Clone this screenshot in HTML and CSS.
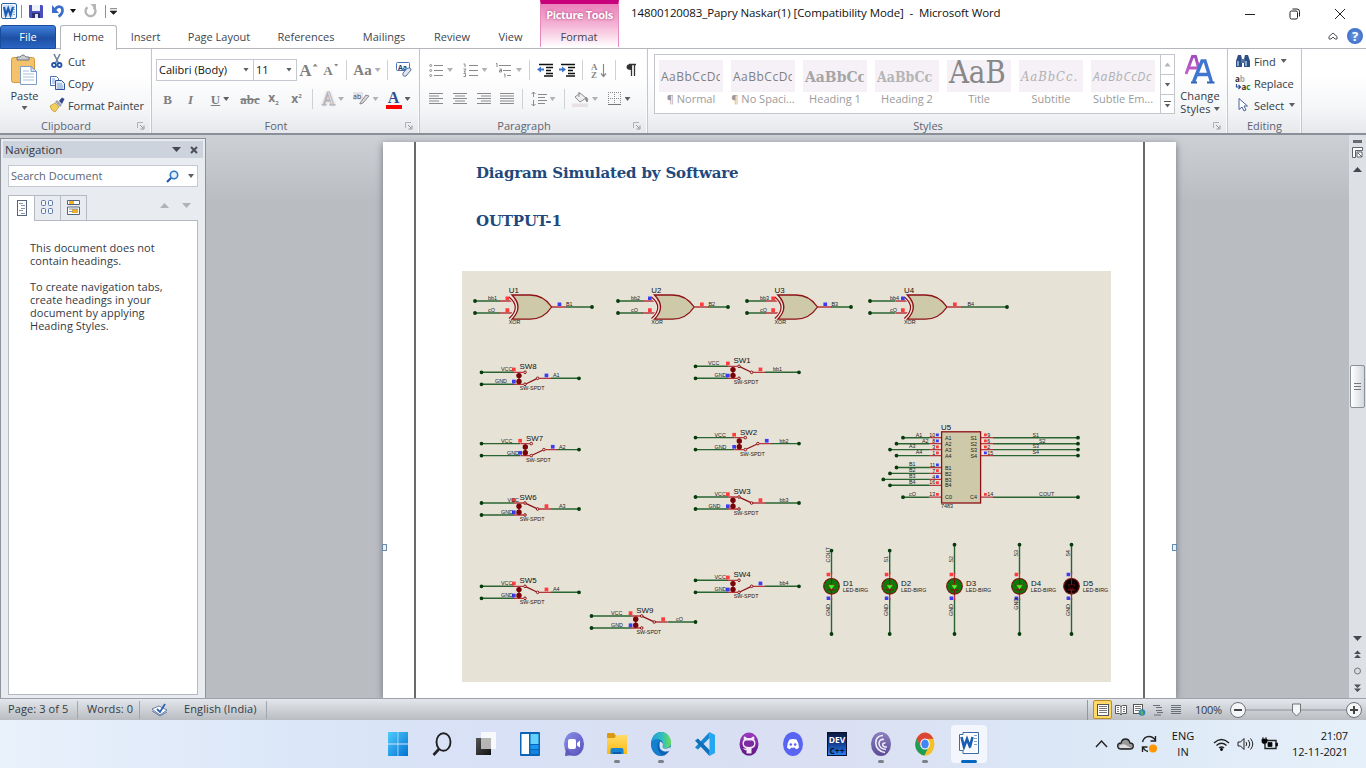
FILE: index.html
```html
<!DOCTYPE html>
<html lang="en">
<head>
<meta charset="utf-8">
<title>14800120083_Papry Naskar(1) [Compatibility Mode] - Microsoft Word</title>
<link rel="stylesheet" href="styles.css">
</head>
<body>
<svg class="defs" width="0" height="0">
  <defs>
    <linearGradient id="gWin" x1="0" y1="0" x2="1" y2="1"><stop offset="0" stop-color="#4fcbfa"/><stop offset="1" stop-color="#0273d4"/></linearGradient>
    <linearGradient id="gChat" x1="0" y1="0" x2="1" y2="1"><stop offset="0" stop-color="#8b8fe8"/><stop offset="1" stop-color="#5450b8"/></linearGradient>
    <linearGradient id="gFold" x1="0" y1="0" x2="0" y2="1"><stop offset="0" stop-color="#ffdc66"/><stop offset="1" stop-color="#fdb913"/></linearGradient>
    <linearGradient id="gEdge" x1="0" y1="0" x2="1" y2="0"><stop offset="0" stop-color="#1c9de0"/><stop offset=".6" stop-color="#35c1b8"/><stop offset="1" stop-color="#6ade55"/></linearGradient>
    <linearGradient id="gGray" x1="0" y1="0" x2="1" y2="1"><stop offset="0" stop-color="#555"/><stop offset="1" stop-color="#111"/></linearGradient>
    <linearGradient id="gGh" x1="0" y1="0" x2="0" y2="1"><stop offset="0" stop-color="#9a3cc0"/><stop offset="1" stop-color="#5e1680"/></linearGradient>
    <linearGradient id="gDev" x1="0" y1="0" x2="0" y2="1"><stop offset="0" stop-color="#0b1a40"/><stop offset=".45" stop-color="#12388a"/><stop offset="1" stop-color="#2a80f0"/></linearGradient>
    <linearGradient id="gBit" x1="0" y1="0" x2="0" y2="1"><stop offset="0" stop-color="#8b80c0"/><stop offset="1" stop-color="#5b4c94"/></linearGradient>
    <linearGradient id="gPurple" x1="0" y1="0" x2="0" y2="1"><stop offset="0" stop-color="#a04cc0"/><stop offset="1" stop-color="#c860c8"/></linearGradient>
    <symbol id="launcher" viewBox="0 0 8 8"><path d="M.5 6V.5H6" fill="none" stroke="#aeb2b8"/><path d="M3 3l3 3M7 3.500V7H3.500" fill="none" stroke="#8f949b"/></symbol>
    <symbol id="word" viewBox="0 0 16 16"><rect x=".5" y=".5" width="15" height="15" rx="1.500" fill="#f4f8fd" stroke="#2a64ad"/><path d="M2 2h10v12H2z" fill="#cfe0f5"/><path d="M12 4h2M12 6.500h2M12 9h2M12 11.500h2" stroke="#7fa3cf"/><path d="M3 4l1.800 8L7.200 5.500 9.500 12 12 4" fill="none" stroke="#1b5cb5" stroke-width="2.200"/></symbol>
    <g id="gate">
      <path d="M-9-6H6M-9 6H6M43 0H57" class="pin"/>
      <path d="M3-12H21C32-12 38-7 42.700 0 38 7 32 12.200 21 12.200H3Q15 0 3-12Z" class="body"/>
      <path d="M0-10Q12.500 0 0 11.500" class="arc-gap"/>
      <path d="M0-10Q12.500 0 0 11.500" class="maroon"/>
    </g>
    <g id="sw">
      <path d="M-11 0H-1.500M-11 12H-1.500M14 6H26" class="pin"/>
      <path d="M-6 1V11" class="maroon"/>
      <circle cx="-6" cy="3.300" r="2.700" class="ball"/><circle cx="-6" cy="9.200" r="2.700" class="ball"/>
      <circle cx="0" cy="0" r="1.300" class="node"/><circle cx="0" cy="12" r="1.300" class="node"/><circle cx="12.600" cy="6" r="1.300" class="node"/>
      <rect x="-13" y="-4.700" width="3.700" height="3.700" class="hi"/><rect x="-13" y="7.400" width="3.700" height="3.700" class="lo"/>
      <text x="-5.300" y="18.200" class="s">SW-SPDT</text>
    </g>
    <g id="up"><path d="M1.200.6L11.400 5.400" class="maroon"/><rect x="19.600" y="1.300" width="3.700" height="3.700" class="hi"/></g>
    <g id="down"><path d="M1.200 11.400L11.400 6.600" class="maroon"/><rect x="19.600" y="1.300" width="3.700" height="3.700" class="lo"/></g>
    <g id="led">
      <path d="M0-14V14" class="pin"/><circle r="7.800" class="lamp"/>
      <path d="M0-7.800V7.800M-4 3.600H4" class="maroon"/><path d="M-3.700-1.500H3.700L0 3.400Z" class="tri"/>
      <text x="11.300" y="6.200" class="s">LED-BIRG</text>
    </g>
  </defs>
</svg>

<header class="titlebar">
  <div class="quick">
    <svg width="16" height="16"><use href="#word"/></svg>
    <i class="vbar"></i>
    <svg width="14" height="14" viewBox="0 0 14 14"><path d="M0 1h13l1 1v12H1L0 13z" fill="#4a4fc0"/><path d="M3 1h8v6H3z" fill="#eef2ff"/><path d="M3 9h8v5H3z" fill="#2b2f70"/><path d="M6 10h3v4H6z" fill="#dfe3f5"/></svg>
    <svg width="13" height="14" viewBox="0 0 13 14"><path d="M3 5.500C6 1 11 2 10.500 7c-.3 2.500-2 4.500-4 5.500" fill="none" stroke="#3b6ec8" stroke-width="2.600"/><path d="M0 1v8h7z" fill="#3b6ec8"/></svg>
    <i class="caret dark"></i>
    <svg width="13" height="14" viewBox="0 0 13 14"><path d="M3.500 3.200a5 5 0 1 0 6 0" fill="none" stroke="#b5b5b5" stroke-width="2.400"/><path d="M6.500 0h5.500v6z" fill="#b5b5b5"/></svg>
    <i class="vbar"></i>
    <svg width="7" height="7" viewBox="0 0 7 7"><path d="M0 .7h7M0 3h7L3.500 6.500z" fill="#222" stroke="#222" stroke-width=".6"/></svg>
  </div>
  <div class="title">14800120083_Papry Naskar(1) [Compatibility Mode]&nbsp; -&nbsp; Microsoft Word</div>
  <div class="winbtns">
    <svg width="12" height="12" viewBox="0 0 12 12"><path d="M1 6.500h10" class="ln"/></svg>
    <svg width="12" height="12" viewBox="0 0 12 12"><rect x="1" y="3" width="7.500" height="8" rx="1.500" class="ln"/><path d="M3.500 1h4.500q2.500 0 2.500 2.500v5" class="ln"/></svg>
    <svg width="12" height="12" viewBox="0 0 12 12"><path d="M1 1l10 10M11 1L1 11" class="ln"/></svg>
  </div>
</header>

<nav class="tabs">
  <span class="file">File</span><span class="home">Home</span><span class="t1">Insert</span><span class="t2">Page Layout</span><span class="t3">References</span><span class="t4">Mailings</span><span class="t5">Review</span><span class="t6">View</span>
  <div class="ctx"><b>Picture Tools</b><span>Format</span></div>
  <div class="help">
    <svg width="10" height="8" viewBox="0 0 10 8"><path d="M1 4.500L5 1l4 3.500v2.500H7L5 5 3 7H1z" fill="none" stroke="#4a4f57"/></svg>
    <span class="q">?</span>
  </div>
</nav>

<section class="ribbon">
  <div class="group clip">
    <div class="gbody">
      <div class="paste">
        <svg width="28" height="32" viewBox="0 0 28 32"><rect x=".5" y="3.500" width="23" height="25" rx="2" fill="#f3c26a" stroke="#d29a3d"/><path d="M6 6V3h3q3-4 6 0h3v3z" fill="#c9ccd1" stroke="#70757c"/><path d="M9.500 12.500h11l5 5v13h-16z" fill="#fff" stroke="#7f9cc6"/><path d="M12 17h6M12 20h11M12 23h11M12 26h11" stroke="#a9bddb"/><path d="M20 12.500v5h5.500z" fill="#d6e2f3" stroke="#7f9cc6"/></svg>
        <span>Paste</span><i class="caret"></i>
      </div>
      <ul class="cmds">
        <li><svg width="16" height="16" viewBox="0 0 16 16"><path d="M5 1l4.500 9M11 1L6.500 10" stroke="#6d8299" stroke-width="1.600"/><circle cx="5" cy="12" r="2" fill="none" stroke="#2456a8" stroke-width="1.800"/><circle cx="10.500" cy="12" r="2" fill="none" stroke="#2456a8" stroke-width="1.800"/></svg>Cut</li>
        <li><svg width="16" height="16" viewBox="0 0 16 16"><path d="M1.500 1.500h6l2 2v7h-8z" fill="#fff" stroke="#4c6fae"/><path d="M6.500 5.500h6l3 3v6h-9z" fill="#e4edfb" stroke="#2b539c"/><path d="M3 4h3M3 6h3M3 8h3M8 9h5M8 11h6M8 13h6" stroke="#7c9bd0"/></svg>Copy</li>
        <li><svg width="16" height="16" viewBox="0 0 16 16"><path d="M1 9l5-3 4 4-4 5q-4-1-5-6z" fill="#f2cf62" stroke="#c79a2a" stroke-width=".8"/><path d="M6 5l2-2 5 5-2 2z" fill="#9aa4b5"/><path d="M10 4l3-3.500 2.500 1.500-2.500 5z" fill="#35478a"/></svg>Format Painter</li>
      </ul>
    </div>
    <footer>Clipboard<svg width="8" height="8"><use href="#launcher"/></svg></footer>
  </div>

  <div class="group font">
    <div class="rows">
      <div class="row f1">
        <span class="combo">Calibri (Body)<i class="caret"></i></span>
        <span class="combo">11<i class="caret"></i></span>
        <span class="serif g17">A<i class="caret up"></i></span><span class="serif g14 sm">A<i class="caret"></i></span>
        <i class="sep"></i><span class="serif g14">Aa<i class="caret pale"></i></span><i class="sep"></i>
        <svg width="18" height="18" viewBox="0 0 18 18"><rect x="1.500" y="1.500" width="13" height="8" rx="1" fill="#fff" stroke="#4973b4"/><text x="3" y="8.500" class="tiny b">Aa</text><path d="M8 12l4-4.500q4-1.500 4 1.500l-5 6q-4 1-3-3z" fill="#dfe6f2" stroke="#5c7097"/></svg>
      </div>
      <div class="row f2">
        <b class="serif g13">B</b><i class="serif g13">I</i><span class="serif g13"><u>U</u><i class="caret m"></i></span>
        <s class="serif g13">abc</s><b class="g12">x<sub>2</sub></b><b class="g12">x<sup>2</sup></b><i class="sep"></i>
        <span class="serif glow">A<i class="caret pale"></i></span>
        <span class="hl"><svg width="17" height="16" viewBox="0 0 17 16"><rect x="0" y="1" width="10" height="8" fill="#e6e2e8"/><text x="0" y="8" class="tiny">ab</text><path d="M7 12l6-8 3 1-6 7-3 1z" fill="#d9d9dc" stroke="#8c8c90"/></svg><i class="caret pale"></i></span>
        <span class="fc"><b class="serif">A</b><i class="caret"></i></span>
      </div>
    </div>
    <footer>Font<svg width="8" height="8"><use href="#launcher"/></svg></footer>
  </div>

  <div class="group para">
    <div class="rows">
      <div class="row p1">
        <span><svg width="15" height="14" viewBox="0 0 15 14" class="gl"><path d="M5 2.500h9M5 7.500h9M5 12.500h9"/><circle cx="1.700" cy="2.500" r="1"/><circle cx="1.700" cy="7.500" r="1"/><circle cx="1.700" cy="12.500" r="1"/></svg><i class="caret pale"></i></span>
        <span><svg width="16" height="14" viewBox="0 0 16 14" class="gl"><path d="M6 2.500h9M6 7.500h9M6 12.500h9M.5 1H2v3M.5 6H3L1 9h2M.5 10.500h2v3H.5"/></svg><i class="caret pale"></i></span>
        <span><svg width="18" height="15" viewBox="0 0 18 15" class="gl"><path d="M4 2.500h12M8 7.500h8M12 12.500h4M1 .5h1V4M4.500 6h2v3h-2V7.500h2M9 11h1v3.500"/></svg><i class="caret pale"></i></span>
        <i class="sep"></i>
        <svg width="17" height="14" viewBox="0 0 17 14" class="bl"><path d="M2 1.500h14M9 4.500h7M9 7.500h5M9 10.500h7M7 13h9"/><path d="M0 6.500l4-3v2h3v2H4v2z" class="ar"/></svg>
        <svg width="17" height="14" viewBox="0 0 17 14" class="bl"><path d="M2 1.500h14M9 4.500h7M9 7.500h5M9 10.500h7M7 13h9"/><path d="M7 6.500l-4-3v2H0v2h3v2z" class="ar"/></svg>
        <i class="sep"></i>
        <svg width="17" height="17" viewBox="0 0 17 17"><text x="0" y="7.500" class="az">A</text><text x="0" y="15.500" class="az">Z</text><path d="M12.500 2v12M10 11.500l2.500 3 2.500-3" fill="none" stroke="#8a8a8a" stroke-width="1.200"/></svg>
        <i class="sep"></i>
        <svg width="12" height="14" viewBox="0 0 12 14"><path d="M6 1Q1.500 1 1.500 4T6 7z" fill="#333"/><path d="M4 1.500h7M6.500 1v12M9.500 1v12" stroke="#333" stroke-width="1.300"/></svg>
      </div>
      <div class="row p2">
        <svg width="14" height="12" viewBox="0 0 14 12" class="gl"><path d="M0 .5h14M0 3h10M0 5.500h14M0 8h10M0 10.500h14"/></svg>
        <svg width="14" height="12" viewBox="0 0 14 12" class="gl"><path d="M0 .5h14M2 3h10M0 5.500h14M2 8h10M0 10.500h14"/></svg>
        <svg width="14" height="12" viewBox="0 0 14 12" class="gl"><path d="M0 .5h14M4 3h10M0 5.500h14M4 8h10M0 10.500h14"/></svg>
        <svg width="14" height="12" viewBox="0 0 14 12" class="gl"><path d="M0 .5h14M0 3h14M0 5.500h14M0 8h14M0 10.500h14"/></svg>
        <i class="sep"></i>
        <span><svg width="16" height="16" viewBox="0 0 16 16" class="gl"><path d="M7 3.500h9M7 6.500h7M7 9.500h9M7 12.500h7M2.500 1v5M.5 3l2-2 2 2M2.500 9v6M.5 13l2 2 2-2"/></svg><i class="caret pale"></i></span>
        <i class="sep"></i>
        <span><svg width="17" height="16" viewBox="0 0 17 16"><path d="M3 6l5-4 6 5-6 4z" fill="#eee" stroke="#8c8c8c"/><path d="M7 6V1M14 6q3 2 1 5-2-2-1-5z" fill="#8c8c8c" stroke="#8c8c8c"/><rect y="12.500" width="16" height="3.500" fill="#e6dfe6"/></svg><i class="caret pale"></i></span>
        <span><svg width="14" height="14" viewBox="0 0 14 14"><path d="M.5 0v13M6.500 0v13M12.500 0v13M0 .5h13M0 6.500h13" stroke="#8a8a8a" stroke-dasharray="1 1"/><path d="M0 12.500h13" stroke="#777"/></svg><i class="caret m"></i></span>
      </div>
    </div>
    <footer>Paragraph<svg width="8" height="8"><use href="#launcher"/></svg></footer>
  </div>

  <div class="group styles">
    <div class="gbody">
      <div class="gallery">
        <figure><div class="s-n">AaBbCcDc</div><figcaption>¶ Normal</figcaption></figure>
        <figure><div class="s-n">AaBbCcDc</div><figcaption>¶ No Spaci...</figcaption></figure>
        <figure><div class="s-h1">AaBbCc</div><figcaption>Heading 1</figcaption></figure>
        <figure><div class="s-h2">AaBbCc</div><figcaption>Heading 2</figcaption></figure>
        <figure><div class="s-t">AaB</div><figcaption>Title</figcaption></figure>
        <figure><div class="s-s">AaBbCc.</div><figcaption>Subtitle</figcaption></figure>
        <figure><div class="s-e">AaBbCcDc</div><figcaption>Subtle Em...</figcaption></figure>
        <div class="gscroll"><span><i class="caret up pale"></i></span><span><i class="caret"></i></span><span><i class="more"></i><i class="caret"></i></span></div>
      </div>
      <div class="change">
        <svg width="30" height="30" viewBox="0 0 30 30"><path d="M1 19L7.500 1.500h3L14 14M4 13h8" fill="none" stroke="url(#gPurple)" stroke-width="3"/><path d="M8.500 27L17 6h3L26.500 27M12 19.500h11" fill="none" stroke="#3f76cf" stroke-width="3.400"/><path d="M6 27.500h6M22 27.500h7.500" stroke="#2f62b8" stroke-width="2"/></svg>
        <span>Change</span><span>Styles <i class="caret"></i></span>
      </div>
    </div>
    <footer>Styles<svg width="8" height="8"><use href="#launcher"/></svg></footer>
  </div>

  <div class="group edit">
    <ul class="cmds">
      <li><svg width="16" height="16" viewBox="0 0 16 16"><path d="M3 2h3l1 4v8H1V8zM10 2h3l2 6v6H9V6z" fill="#2d4f83"/><path d="M6 6h4v4H6z" fill="#52719e"/><path d="M3 8v5M11 8v5" stroke="#a9c4ea" stroke-width="1.500"/></svg>Find<i class="caret"></i></li>
      <li><svg class="spill" width="16" height="16" viewBox="0 0 16 16"><text x="0" y="7" class="rp">a<tspan class="lt">b</tspan></text><text x="6.500" y="15" class="rp">a<tspan class="grn">c</tspan></text><path d="M1.500 9v3h4M3.500 10l2 2-2 2" fill="none" stroke="#2b4f97" stroke-width="1.200"/></svg>Replace</li>
      <li><svg width="16" height="16" viewBox="0 0 16 16"><path d="M4 1.500v11l3-2.500 2 4 2-1-2-4h3.500z" fill="#fff" stroke="#4b6396"/></svg>Select<i class="caret"></i></li>
    </ul>
    <footer>Editing</footer>
  </div>
</section>

<main class="work">
  <aside class="navpane">
    <div class="nhead">Navigation<span><i class="caret big"></i><svg width="8" height="8" viewBox="0 0 8 8"><path d="M1 1l6 6M7 1L1 7" stroke="#4a4e55" stroke-width="2"/></svg></span></div>
    <div class="search">Search Document<span><svg width="13" height="13" viewBox="0 0 13 13"><circle cx="8" cy="5" r="3.700" fill="#e3effb" stroke="#2f76c4" stroke-width="1.600"/><path d="M5 8l-4 4" stroke="#2456a8" stroke-width="2.200"/></svg><i class="caret"></i></span></div>
    <div class="ntabs">
      <span class="on"><svg width="10" height="16" viewBox="0 0 10 16"><rect x=".5" y=".5" width="9" height="15" fill="#fff" stroke="#55647c"/><path d="M2 3.500h4M4 5.500h4M4 8.500h4M2 10.500h4M4 13.500h4" stroke="#8894a8"/></svg></span>
      <span><svg width="13" height="15" viewBox="0 0 13 15" fill="#f3f7fc" stroke="#5a76a8"><rect x=".5" y=".5" width="4" height="5" rx="1"/><rect x="7.500" y=".5" width="4" height="5" rx="1"/><rect x=".5" y="8.500" width="4" height="5" rx="1"/><rect x="7.500" y="8.500" width="4" height="5" rx="1"/></svg></span>
      <span><svg width="13" height="15" viewBox="0 0 13 15"><path d="M.5.500h12v4H.5zM.5 7h12v7.500H.5z" fill="#fff" stroke="#55647c"/><path d="M2 1h5v3H2zM5 9h6v4H5z" fill="#f0b323"/><path d="M2 9h9M2 11.500h4" stroke="#8894a8"/></svg></span>
      <div><i class="caret up big pale"></i><i class="caret big pale"></i></div>
    </div>
    <div class="nbody"><p>This document does not<br>contain headings.</p><p>To create navigation tabs,<br>create headings in your<br>document by applying<br>Heading Styles.</p></div>
  </aside>

  <div class="canvas">
    <article class="page">
      <i class="handle"></i>
      <div class="sheet">
        <h2>Diagram Simulated by Software</h2>
        <h2>OUTPUT-1</h2>
        <svg class="circuit" width="649" height="411" viewBox="462 271 649 411">
          <g class="wires">
            <path d="M475 301H500M475 313H500M566 307H592M618 301H643M618 313H643M708 307H728M747 301H766M747 313H766M831 307H851M870 301H895M870 313H895M961 307H1007"/>
            <path d="M481 372.300H514M481 384.300H514M551 378.300H579M696 366.300H728M696 378.300H728M765 372.300H799M481 443.600H520M481 455.600H520M557 449.600H579M696 437.600H734M696 449.600H734M771 443.600H799M481 503H514M481 515H514M551 509H579M696 497H728M696 509H728M765 503H799M481 586.300H514M481 598.300H514M551 592.300H579M696 580.300H728M696 592.300H728M765 586.300H799M592 616H631M592 628H631M668 622H696"/>
            <path d="M903 437.700H929M896.500 443.700H929M890 449.600H929M896.500 455.600H929M896.500 467.500H929M890 473.400H929M883.300 479.400H929M890 485.300H929M903 497.200H929M993 437.700H1078M993 443.700H1078M993 449.600H1078M993 455.600H1078M993 497.200H1078"/>
            <path d="M831.500 550.600V574M831.500 598V634M889.700 550.600V574M889.700 598V634M954.500 544.700V574M954.500 598V634M1019.500 544.700V574M1019.500 598V634M1071.500 544.700V574M1071.500 598V634"/>
          </g>
          <path class="dots" d="M475 301h0M475 313h0M592 307h0M618 301h0M618 313h0M728 307h0M747 301h0M747 313h0M851 307h0M870 301h0M870 313h0M1007 307h0M481.500 372.300h0M481.500 384.300h0M579 378.300h0M695.500 366.300h0M695.500 378.300h0M799 372.300h0M481.500 443.600h0M481.500 455.600h0M579 449.600h0M695.500 437.600h0M695.500 449.600h0M799 443.600h0M481.500 503h0M481.500 515h0M579 509h0M695.500 497h0M695.500 509h0M799 503h0M481.500 586.300h0M481.500 598.300h0M579 592.300h0M695.500 580.300h0M695.500 592.300h0M799 586.300h0M591.500 616h0M591.500 628h0M695.500 622h0M903 437.700h0M896.500 443.700h0M890 449.600h0M896.500 455.600h0M896.500 467.500h0M890 473.400h0M883.300 479.400h0M890 485.300h0M903 497.200h0M1078 437.700h0M1078 443.700h0M1078 449.600h0M1078 455.600h0M1078 497.200h0M831.500 550.600h0M831.500 634h0M889.700 550.600h0M889.700 634h0M954.500 544.700h0M954.500 634h0M1019.500 544.700h0M1019.500 634h0M1071.500 544.700h0M1071.500 634h0"/>
          <use href="#gate" x="509" y="307"/><use href="#gate" x="651.500" y="307"/><use href="#gate" x="774.800" y="307"/><use href="#gate" x="904.300" y="307"/>
          <path class="hi" d="M505.500 296.400h3.700v3.700h-3.700zM505.500 308.300h3.700v3.700h-3.700zM648 308.300h3.700v3.700h-3.700zM700 302.400h3.700v3.700h-3.700zM771.300 296.400h3.700v3.700h-3.700zM771.300 308.300h3.700v3.700h-3.700zM901 308.300h3.700v3.700h-3.700zM953 302.400h3.700v3.700h-3.700z"/>
          <path class="lo" d="M557.600 302.400h3.700v3.700h-3.700zM648 296.400h3.700v3.700h-3.700zM823.400 302.400h3.700v3.700h-3.700zM901 296.400h3.700v3.700h-3.700z"/>
          <g class="l"><text x="508.700" y="293.200">U1</text><text x="651.200" y="293.200">U2</text><text x="774.500" y="293.200">U3</text><text x="904" y="293.200">U4</text></g>
          <g class="s"><text x="508.700" y="324">XOR</text><text x="651.200" y="324">XOR</text><text x="774.500" y="324">XOR</text><text x="904" y="324">XOR</text>
            <text x="488" y="300">bb1</text><text x="488" y="312">cO</text><text x="566" y="305.800">B1</text>
            <text x="631" y="300">bb2</text><text x="631" y="312">cO</text><text x="708.500" y="305.800">B2</text>
            <text x="760" y="300">bb3</text><text x="760" y="312">cO</text><text x="831.500" y="305.800">B3</text>
            <text x="890" y="300">bb4</text><text x="890" y="312">cO</text><text x="967.500" y="305.800">B4</text></g>

          <use href="#sw" x="525" y="372.300"/><use href="#down" x="525" y="372.300"/>
          <use href="#sw" x="739" y="366.300"/><use href="#up" x="739" y="366.300"/>
          <use href="#sw" x="531.300" y="443.600"/><use href="#down" x="531.300" y="443.600"/>
          <use href="#sw" x="745.300" y="437.600"/><use href="#down" x="745.300" y="437.600"/>
          <use href="#sw" x="525" y="503"/><use href="#up" x="525" y="503"/>
          <use href="#sw" x="739" y="497"/><use href="#up" x="739" y="497"/>
          <use href="#sw" x="525" y="586.300"/><use href="#up" x="525" y="586.300"/>
          <use href="#sw" x="739" y="580.300"/><use href="#down" x="739" y="580.300"/>
          <use href="#sw" x="641.700" y="616"/><use href="#up" x="641.700" y="616"/>
          <g class="l"><text x="519.500" y="369.300">SW8</text><text x="733.500" y="363.300">SW1</text><text x="526" y="440.500">SW7</text><text x="740" y="434.500">SW2</text><text x="519.500" y="500">SW6</text><text x="733.500" y="494">SW3</text><text x="519.500" y="583.300">SW5</text><text x="733.500" y="577.300">SW4</text><text x="636.200" y="613">SW9</text></g>
          <g class="s">
            <text x="501" y="371.200">VCC</text><text x="495" y="383.200">GND</text><text x="553" y="377.200">A1</text>
            <text x="708" y="365.200">VCC</text><text x="714.500" y="377.200">GND</text><text x="773" y="371.200">bb1</text>
            <text x="501" y="442.500">VCC</text><text x="507" y="454.500">GND</text><text x="559" y="448.500">A2</text>
            <text x="714.500" y="436.500">VCC</text><text x="714.500" y="448.500">GND</text><text x="779.500" y="442.500">bb2</text>
            <text x="507.500" y="501.900">VCC</text><text x="501" y="513.900">GND</text><text x="559" y="507.900">A3</text>
            <text x="714.500" y="495.900">VCC</text><text x="708.500" y="507.900">GND</text><text x="779.500" y="501.900">bb3</text>
            <text x="501" y="585.200">VCC</text><text x="501" y="597.200">GND</text><text x="553" y="591.200">A4</text>
            <text x="714.500" y="579.200">VCC</text><text x="714.500" y="591.200">GND</text><text x="779.500" y="585.200">bb4</text>
            <text x="611" y="614.900">VCC</text><text x="611" y="626.900">GND</text><text x="676" y="620.900">cO</text>
          </g>

          <path class="pin" d="M929 437.700h12M929 443.700h12M929 449.600h12M929 455.600h12M929 467.500h12M929 473.400h12M929 479.400h12M929 485.300h12M929 497.200h12M981 437.700h12M981 443.700h12M981 449.600h12M981 455.600h12M981 497.200h12"/>
          <rect x="941.600" y="431.800" width="39" height="71.200" class="body"/>
          <path class="hi" d="M936 445.500h2.800v2.800H936zM936 451.500h2.800v2.800H936zM936 469.300h2.800v2.800H936zM936 481.200h2.800v2.800H936zM936 493h2.800v2.800H936zM984 433.500h2.800v2.800H984zM984 439.500h2.800v2.800H984zM984 445.500h2.800v2.800H984zM984 493h2.800v2.800H984z"/>
          <path class="lo" d="M936 433.500h2.800v2.800H936zM936 439.500h2.800v2.800H936zM936 463.400h2.800v2.800H936zM936 475.300h2.800v2.800H936zM984 451.500h2.800v2.800H984z"/>
          <text x="941" y="430" class="l">U5</text>
          <g class="s">
            <text x="941" y="508">7483</text>
            <text x="945" y="439.800">A1</text><text x="945" y="445.800">A2</text><text x="945" y="451.700">A3</text><text x="945" y="457.700">A4</text><text x="945" y="469.600">B1</text><text x="945" y="475.500">B2</text><text x="945" y="481.500">B3</text><text x="945" y="487.400">B4</text><text x="945" y="499.300">C0</text>
            <text x="970.500" y="439.800">S1</text><text x="970.500" y="445.800">S2</text><text x="970.500" y="451.700">S3</text><text x="970.500" y="457.700">S4</text><text x="970" y="499.300">C4</text>
            <g text-anchor="end"><text x="935.300" y="436.800">10</text><text x="935.300" y="442.800">8</text><text x="935.300" y="448.700">3</text><text x="935.300" y="454.700">1</text><text x="935.300" y="466.600">11</text><text x="935.300" y="472.500">7</text><text x="935.300" y="478.500">4</text><text x="935.300" y="484.400">16</text><text x="935.300" y="496.300">13</text></g>
            <text x="987.300" y="436.800">9</text><text x="987.300" y="442.800">6</text><text x="987.300" y="448.700">2</text><text x="987.300" y="454.700">15</text><text x="987.300" y="496.300">14</text>
            <text x="915.700" y="436.500">A1</text><text x="922" y="442.500">A2</text><text x="909" y="448.400">A3</text><text x="915.700" y="454.400">A4</text><text x="909" y="466.300">B1</text><text x="909" y="472.200">B2</text><text x="909" y="478.200">B3</text><text x="909" y="484.100">B4</text><text x="909" y="496">cO</text>
            <text x="1032.500" y="436.500">S1</text><text x="1039" y="442.500">S2</text><text x="1032.500" y="448.400">S3</text><text x="1032.500" y="454.400">S4</text><text x="1039" y="496">COUT</text>
          </g>

          <g class="on"><use href="#led" x="831.500" y="586.300"/><use href="#led" x="889.700" y="586.300"/><use href="#led" x="954.500" y="586.300"/><use href="#led" x="1019.500" y="586.300"/></g>
          <g class="off"><use href="#led" x="1071.500" y="586.300"/></g>
          <path class="hi" d="M826.600 572.700h3.600v3.600h-3.600zM884.800 572.700h3.600v3.600h-3.600zM949.600 572.700h3.600v3.600h-3.600zM1014.600 572.700h3.600v3.600h-3.600z"/>
          <path class="lo" d="M1066.600 572.700h3.600v3.600h-3.600zM826.600 596.500h3.600v3.600h-3.600zM884.800 596.500h3.600v3.600h-3.600zM949.600 596.500h3.600v3.600h-3.600zM1014.600 596.500h3.600v3.600h-3.600zM1066.600 596.500h3.600v3.600h-3.600z"/>
          <g class="l"><text x="843" y="585.600">D1</text><text x="901" y="585.600">D2</text><text x="966" y="585.600">D3</text><text x="1031" y="585.600">D4</text><text x="1083" y="585.600">D5</text></g>
          <g class="s">
            <text transform="translate(830 562.500) rotate(-90)">COUT</text><text transform="translate(888.300 562.500) rotate(-90)">S1</text><text transform="translate(953 562.500) rotate(-90)">S2</text><text transform="translate(1018 556.500) rotate(-90)">S3</text><text transform="translate(1070 556.500) rotate(-90)">S4</text>
            <text transform="translate(830 616) rotate(-90)">GND</text><text transform="translate(888.300 616) rotate(-90)">GND</text><text transform="translate(953 616) rotate(-90)">GND</text><text transform="translate(1018 609.800) rotate(-90)">GND</text><text transform="translate(1070 616) rotate(-90)">GND</text>
          </g>
        </svg>
      </div>
      <i class="handle"></i>
    </article>
  </div>

  <div class="vscroll">
    <i class="split"></i>
    <svg class="ruler" width="11" height="11" viewBox="0 0 11 11"><path d="M.5.500h10v3h-7v7h-3zM5 5h5v5H5zM6 6l4 4" fill="#fff" stroke="#5e646c"/></svg>
    <i class="caret up big"></i>
    <i class="thumb"></i>
    <i class="caret big"></i>
    <svg class="browse" width="9" height="46" viewBox="0 0 9 46"><path d="M1 7l3.500-3.500L8 7zM1 11l3.500-3.500L8 11zM1 37.500h7L4.500 41zM1 41.500h7L4.500 45z" fill="#4a4f57"/><circle cx="4.500" cy="24" r="3" fill="#d9dce0" stroke="#777"/></svg>
  </div>
</main>

<footer class="status">
  <span class="st1">Page: 3 of 5</span><span class="st2">Words: 0</span>
  <span class="st3"><svg width="17" height="14" viewBox="0 0 17 14"><path d="M1 6l7-3 8 4-7 5z" fill="#fff" stroke="#6781ac"/><path d="M1 8l8 5 7-4" fill="none" stroke="#6781ac"/><path d="M6 6l3 3 5-8" fill="none" stroke="#2f62b8" stroke-width="1.800"/></svg></span>
  <span class="st4">English (India)</span>
  <div class="views">
    <span class="sel"><svg width="12" height="12" viewBox="0 0 12 12"><rect x=".5" y=".5" width="11" height="11" fill="#fff" stroke="#555"/><path d="M2 2.500h8M2 4.500h8M2 6.500h8M2 8.500h8" stroke="#777"/></svg></span>
    <svg width="12" height="12" viewBox="0 0 12 12"><path d="M.5 1.500h4l1.500 1 1.500-1h4v8h-4L6 11 4.500 9.500h-4zM6 2v9" fill="#fff" stroke="#555"/><path d="M2 3.500h2M2 5.500h2M2 7.500h2M8 3.500h2M8 5.500h2M8 7.500h2" stroke="#777"/></svg>
    <svg width="13" height="12" viewBox="0 0 13 12"><rect x=".5" y=".5" width="9" height="9" fill="#fff" stroke="#555"/><path d="M2 2.500h6M2 4.500h6M2 6.500h4" stroke="#777"/><circle cx="9" cy="8.500" r="3.300" fill="#2e86b8"/><path d="M7 8q2-3 3 0t-1 3z" fill="#5fb35a"/></svg>
    <svg width="12" height="12" viewBox="0 0 12 12"><path d="M1 1.500h7M4 3.500h6M4 6.500h6M5 8.500h6M2 11h7" stroke="#6a6f76"/></svg>
    <svg width="12" height="12" viewBox="0 0 12 12"><path d="M1 1.500h10M1 3.500h10M1 5.500h10M1 7.500h10M1 9.500h10" stroke="#6a6f76"/></svg>
  </div>
  <span class="pct">100%</span>
  <svg class="zoom" width="132" height="20" viewBox="0 0 132 20"><path d="M16 10h100" stroke="#8b9097"/><g fill="#f4f5f7" stroke="#6e737a"><circle cx="8" cy="10" r="7.500"/><circle cx="124" cy="10" r="7.500"/><path d="M62.500 4h8v8l-4 4-4-4z"/></g><path d="M4 10h8M120 10h8M124 6v8" stroke="#444" stroke-width="2"/></svg>
</footer>

<div class="taskbar">
  <div class="apps">
    <span><svg viewBox="0 0 20 24"><path d="M0 0h9.600v11.600H0zM10.300 0H20v11.600h-9.700zM0 12.400h9.600V24H0zM10.300 12.400H20V24h-9.700z" fill="url(#gWin)"/></svg></span>
    <span><svg viewBox="0 0 20 24"><ellipse cx="11.500" cy="10" rx="7" ry="8.800" fill="none" stroke="#222" stroke-width="1.900"/><path d="M7 17l-5.500 6" stroke="#222" stroke-width="2.600"/></svg></span>
    <span><svg viewBox="0 0 20 24"><rect x="0" y="6" width="15" height="17" fill="url(#gGray)"/><rect x="5" y="0" width="15" height="17" fill="#fff" opacity=".78"/><path d="M5 6h10v11H5z" fill="#aaa" opacity=".7"/></svg></span>
    <span><svg viewBox="0 0 20 24"><rect width="20" height="24" rx="1" fill="#0a63b5"/><path d="M1.500 2h7.500v20H1.500z" fill="#fbfdff"/><path d="M10.500 2h8v10h-8z" fill="#62d2fc"/><path d="M10.500 13h8v4h-8z" fill="#1798f0"/><path d="M10.500 18h8v4h-8z" fill="#1284df"/></svg></span>
    <span><svg viewBox="0 0 20 24"><ellipse cx="10" cy="12" rx="10" ry="12" fill="url(#gChat)"/><path d="M1 24l1-8 7 7z" fill="#6158b8"/><rect x="4" y="7" width="8" height="10" rx="2" fill="#fff"/><path d="M13 11l3-2.500v7L13 13.500z" fill="#fff"/></svg></span>
    <span class="run"><svg viewBox="0 0 20 24"><path d="M0 2q0-1 1-1h6l2 3-2 3H0z" fill="#d99a12"/><path d="M0 6h8l2-3h10v19H0z" fill="url(#gFold)"/><path d="M3.500 22v-4q0-2 2-2h9q2 0 2 2v4z" fill="#1682d4"/><path d="M6 20h8v2H6z" fill="#0b5ea8"/></svg></span>
    <span class="run"><svg viewBox="0 0 20 24"><ellipse cx="10" cy="12" rx="10" ry="12" fill="#0d63b6"/><path d="M0 11C1 3 6 0 10 0c6 0 10 5 10 10.500 0 4-3 6-6 6-2 0-3-1-2-2.500 1-5-3-7-6-6.500S1 8.500 0 11z" fill="url(#gEdge)"/><path d="M0 11c2-4 6-5 9-2-4 2-4 10 3 15C4 24 0 18 0 11z" fill="#1680d0"/><path d="M9 9.500q3 .5 3 3.500-1 2 0 3 3 2 7.500-1v3q-3 2-6 1.500-5-1-5-6 0-2.500.5-4z" fill="#d6e3f8"/></svg></span>
    <span><svg viewBox="0 0 20 24"><path d="M14.500 0L20 3v18l-5.500 3z" fill="#24a6f0"/><path d="M14.500 0v6L3 17.500 0 15.500z" fill="#1486cf"/><path d="M14.500 24v-6L3 6.500 0 8.500z" fill="#0f6fb8"/></svg></span>
    <span><svg viewBox="0 0 20 24"><ellipse cx="10" cy="12" rx="9.500" ry="11.500" fill="url(#gGh)"/><path d="M7.500 21.500V18q-2.500.7-3.500-2 2 1 3.500.5-4-.8-4-5.500 0-2 1.300-3.500-.5-1.500.2-3 1.500 0 3 1.400h4q1.500-1.400 3-1.400.7 1.500.2 3 1.300 1.500 1.300 3.500 0 4.700-4 5.500v5z" fill="#f4e9fa"/><path d="M7 8.500h6q2.500.5 2 4-.8 2.500-5 2.500t-5-2.500q-.5-3.500 2-4z" fill="#7d2ba0"/></svg></span>
    <span><svg viewBox="0 0 20 24"><ellipse cx="10" cy="12" rx="10" ry="12" fill="#5865f2"/><path d="M6.500 7.500q3.500-1 7 0Q16 11 16 15.500q-1.500 1.500-3 1.800l-1-1.600H8l-1 1.600q-1.500-.3-3-1.800Q4 11 6.500 7.500z" fill="#fff"/><circle cx="7.800" cy="12.500" r="1.300" fill="#5865f2"/><circle cx="12.200" cy="12.500" r="1.300" fill="#5865f2"/></svg></span>
    <span><svg viewBox="0 0 20 24"><rect width="20" height="24" fill="#081230"/><rect x="1" y="1" width="18" height="22" fill="url(#gDev)"/><text x="10" y="11" class="dev w">DEV</text><text x="10" y="21.500" class="dev k">C++</text></svg></span>
    <span class="run"><svg viewBox="0 0 20 24"><ellipse cx="10" cy="12" rx="10" ry="12" fill="url(#gBit)"/><path d="M12 3.500C2 3 2 19 14 20.500M13 7.500c-7-1-7 9 2 10M14.500 11c-4-.5-4 4 1.500 4" fill="none" stroke="#f0eefa" stroke-width="1.600"/></svg></span>
    <span class="run"><svg viewBox="0 0 20 24"><ellipse cx="10" cy="12" rx="9.500" ry="11.500" fill="#f5c026"/><path d="M1.500 6.500Q5 .5 10 .5t8.500 6.200L10 7l-4 8z" fill="#db4437"/><path d="M1.600 6.500Q-2 15 3.500 20.500 6 23 9.500 23.500L13.500 15H6z" fill="#1f9d58"/><ellipse cx="10" cy="12" rx="4.800" ry="5.600" fill="#fff"/><ellipse cx="10" cy="12" rx="3.800" ry="4.600" fill="#4285f4"/></svg></span>
    <span class="active"><svg viewBox="0 0 20 24"><path d="M.5 2.500H4V.5h15.500v21H4v-3H.5z" fill="#fff" stroke="#3c6ca8"/><path d="M15 3.500h3M15 6.500h3M15 9.500h3M15 12.500h3" stroke="#7fa3cf"/><path d="M2.500 5l2.500 10L8 7l3 8 2.500-10" fill="none" stroke="#1b5cb5" stroke-width="2.600"/><path d="M8 18q5-4 9-3v5H6z" fill="#f5f8fc"/></svg></span>
  </div>
  <div class="tray">
    <svg width="13" height="8" viewBox="0 0 13 8"><path d="M1 7l5.500-6L12 7" class="ln b2"/></svg>
    <svg width="17" height="12" viewBox="0 0 17 12"><path d="M4 11Q.7 11 .7 8T4 5q1-4 4.500-4t4.500 4q3.300 0 3.300 3T13 11z" fill="#999" stroke="#222" stroke-width="1.300"/><path d="M2 8q4-3 7-1l5 3H3z" fill="#ddd"/></svg>
    <svg width="17" height="18" viewBox="0 0 17 18"><path d="M1.500 7Q3 1.500 8 1.500q4 0 6.500 4M14.500 1v5h-5M1.500 17v-5h5M2 12.500Q4 16 7 16.500" class="ln b2"/><circle cx="12" cy="13.500" r="4" fill="#ff9500"/></svg>
    <div class="lang">ENG<br>IN</div>
    <svg width="17" height="13" viewBox="0 0 17 13"><path d="M1 5q7.500-7 15 0M3.500 7.500q5-4.500 10 0M6 10q2.500-2.200 5 0" class="ln b2"/><circle cx="8.500" cy="11.500" r="1.400"/></svg>
    <svg width="17" height="14" viewBox="0 0 17 14"><path d="M1 5h2.500L7 1.500v11L3.500 9H1zM9 5q1.500 2 0 4M11 3q3.500 4 0 8M13.500 1.500q4.500 5.500 0 11" class="ln"/></svg>
    <svg width="17" height="14" viewBox="0 0 17 14"><path d="M6 3.500h9v8H4V7" class="ln b2"/><path d="M1 2h5v3.500L3.500 7 1 5.500zM2 0v2M5 0v2M7 5.500h4v4H7zM15 6h1.500v3H15z" stroke="#111" stroke-width=".8"/></svg>
    <div class="clock">21:07<br>12-11-2021</div>
  </div>
</div>
</body>
</html>
```

FILE: styles.css
```css
* { box-sizing: border-box; }
body { margin: 0; width: 1366px; height: 768px; overflow: hidden; display: flex; flex-direction: column; background: #fff; color: #333a45; font: 11px/13px "Open Sans", "Noto Sans", sans-serif; }
svg { display: block; flex: none; }
.defs { position: absolute; }
.spill { overflow: visible; }
.ln { fill: none; stroke: #222; }
.b2 { stroke-width: 1.400; }
.caret { display: inline-block; flex: none; width: 6px; height: 4px; background: #5c5f63; clip-path: polygon(0 0, 100% 0, 50% 100%); }
.caret.up { clip-path: polygon(50% 0, 100% 100%, 0 100%); }
.caret.big { width: 9px; height: 5px; background: #44484e; }
.caret.pale, .caret.big.pale { background: #b0b2b6; }
.caret.dark { background: #111; }

.titlebar { height: 24px; flex: none; display: flex; }
.quick { display: flex; align-items: center; width: 631px; padding: 0 0 2px 1px; }
.quick > * { margin-right: 8px; }
.quick > :first-child { margin-right: 4px; }
.quick > .vbar { margin-right: 7px; }
.quick > :nth-child(4) { margin: 0 5px 0 1px; }
.quick > :nth-child(7) { margin-right: 4px; }
.vbar { width: 1px; height: 13px; background: #8d9299; }
.title { width: 600px; color: #111; font-size: 11.5px; line-height: 26px; letter-spacing: -.095px; white-space: nowrap; }
.winbtns { display: flex; gap: 33px; padding: 8px 0 0 13px; }

.tabs { height: 25px; flex: none; display: flex; line-height: 25px; position: relative; border-bottom: 1px solid #b3b7bc; color: #40464f; }
.tabs > span { text-align: center; }
.file { width: 56px; height: 24px; margin-top: 1px; background: linear-gradient(#3f7fdb, #1d50a4 55%, #2a65c4); border: 1px solid #184c9c; border-radius: 3px 3px 0 0; color: #fff; line-height: 22px; }
.home { width: 57px; height: 25px; margin: 1px 0 -1px 4px; border: 1px solid #b3b7bc; border-bottom: 0; border-radius: 3px 3px 0 0; background: #fff; line-height: 22px; }
.t1 { width: 57px; } .t2 { width: 90px; } .t3 { width: 84px; } .t4 { width: 72px; } .t5 { width: 64px; } .t6 { width: 53px; }
.ctx { position: absolute; left: 540px; top: -24px; width: 79px; height: 47px; border-top: 4px solid #c9007b; border-left: 1px solid #e58bbd; border-right: 1px solid #e58bbd; background: linear-gradient(#ea82bb, #f5b5d6 50%, #fff); display: grid; grid-template-rows: 23px 20px; text-align: center; }
.ctx b { color: #fff; line-height: 22px; letter-spacing: -.35px; text-shadow: 0 0 3px #a8346f; white-space: nowrap; }
.ctx span { line-height: 20px; padding-right: 1px; }
.help { margin-left: auto; display: flex; align-items: center; gap: 9px; padding-right: 3px; }
.q { width: 16px; height: 16px; border-radius: 8px; background: radial-gradient(#6d9be6, #2c5fbd); color: #fff; font: bold 13px/16px "Open Sans", sans-serif; text-align: center; }

.ribbon { height: 86px; flex: none; display: flex; background: linear-gradient(#fff 30%, #f5f6f8 70%, #e6e8ec); border-bottom: 2px solid #8a9099; }
.group { display: flex; flex-direction: column; border-right: 1px solid #c3c7cd; box-shadow: inset -1px 0 #fafbfc; }
.group > :first-child { height: 67px; flex: none; }
.group footer { height: 17px; line-height: 19px; text-align: center; position: relative; color: #5c6470; padding-right: 19px; }
.group footer svg { position: absolute; right: 6px; top: 6px; }
.group.edit footer { padding: 0; }
.clip { width: 152px; } .font { width: 268px; } .para { width: 228px; } .styles { width: 580px; } .edit { width: 74px; }
.gbody { display: flex; }
.paste { width: 49px; padding-top: 5px; display: flex; flex-direction: column; align-items: center; }
.paste span { margin-top: 3px; }
.paste .caret { margin-top: 4px; }
.cmds { list-style: none; margin: 0; padding: 1px 0 0; white-space: nowrap; }
.cmds li { height: 22px; display: flex; align-items: center; gap: 3px; letter-spacing: -.06px; }
.cmds li .caret { margin-left: 2px; }
.edit .cmds { padding-left: 7px; }
.rows { padding: 10px 0 0 4px; }
.row { display: grid; height: 22px; align-items: center; justify-items: center; color: #808080; }
.row + .row { margin-top: 7px; }
.row > span { display: flex; align-items: center; gap: 3px; }
.f1 { grid-template-columns: 98px 43px 23px 22px 9px 32px 9px 23px; }
.f2 { grid-template-columns: 23px 23px 36px 24px 23px 23px 9px 32px 33px 32px; }
.p1 { grid-template-columns: 34px 34px 33px 9px 22px 22px 9px 24px 9px 22px; }
.p2 { grid-template-columns: 24px 24px 24px 22px 8px 34px 8px 34px 34px; }
.row .combo { justify-self: stretch; justify-content: space-between; height: 22px; padding: 0 4px 1px 2px; border: 1px solid #c5c8ce; background: #fff; color: #111; }
.combo + .combo { margin-left: -1px; }
.sep { width: 1px; height: 20px; background: #cfd1d6; }
.serif { font-family: "Liberation Serif", serif; }
.row .g17 { font-size: 17px; font-weight: bold; gap: 1px; }
.row .g13 { font-size: 13px; font-weight: bold; }
.row .g12 { font-size: 12px; margin-top: -2px; }
.row .g14 { font-size: 15px; font-weight: bold; }
.row .sm { font-size: 13px; gap: 1px; }
.g17 .caret, .sm .caret { margin-bottom: 10px; background: #888; width: 5px; height: 3px; }
.row i.g13 { font-style: italic; }
.row b sub, .row b sup { font-size: 6px; line-height: 6px; }
.row b sub { vertical-align: -3px; } .row b sup { vertical-align: 5px; }
.glow { font-size: 18px; color: #fff; -webkit-text-stroke: 1px #b9b4bb; text-shadow: 0 0 3px #aaa; }
.fc b { font-size: 16px; line-height: 16px; color: #2b4f8f; border-bottom: 4px solid #f00; width: 16px; height: 19px; text-align: center; }
.tiny { font: 7px "Open Sans", sans-serif; fill: #444; }
.tiny.b { font-weight: bold; fill: #23406f; }
.gl { fill: none; stroke: #8a8a8a; }
.bl { fill: none; stroke: #111; stroke-width: 1.400; }
.bl .ar { fill: #3f72cc; stroke: none; }
.az { font: bold 9px "Liberation Serif", serif; fill: #888; }
.rp { font: bold 8px "Open Sans", sans-serif; fill: #333; }
.grn { fill: #128a12; } .lt { fill: #aaa; }

.gallery { width: 521px; height: 60px; margin: 5px 0 0 6px; border: 1px solid #c3c6cb; display: flex; padding-left: 4px; background: #fff; }
.gallery figure { margin: 5px 8px 0 0; width: 64px; flex: none; text-align: center; color: #9b9b9b; white-space: nowrap; }
.gallery figure div { height: 32px; background: #f5f1f7; overflow: hidden; color: #808080; line-height: 34px; text-align: left; padding: 0 2px; border-right: 3px solid #f5f1f7; }
.gallery figcaption { line-height: 14px; }
.gallery .s-n { font-size: 12px; letter-spacing: .5px; }
.gallery .s-h1 { font: bold 15.5px/34px "DejaVu Serif Condensed", serif; color: #a5a5a5; }
.gallery .s-h2 { font: bold 14px/34px "DejaVu Serif Condensed", serif; color: #b5b5b5; }
.gallery .s-t { font: 31px/24px "DejaVu Serif Condensed", serif; color: #888; letter-spacing: -.3px; }
.gallery .s-s { font: italic 13px/34px "DejaVu Serif Condensed", serif; color: #b0b0b0; letter-spacing: .9px; }
.gallery .s-e { font-size: 12px; font-style: italic; color: #b0b0b0; letter-spacing: .7px; }
.gscroll { width: 15px; margin-left: -3px; border-left: 1px solid #c3c6cb; display: grid; grid-template-rows: 20px 20px 18px; }
.gscroll span { display: flex; flex-direction: column; gap: 2px; align-items: center; justify-content: center; border-bottom: 1px solid #c3c6cb; }
.gscroll span:last-child { border: 0; }
.more { width: 7px; height: 1px; background: #555; }
.change { width: 50px; padding-top: 6px; display: flex; flex-direction: column; align-items: center; }
.change span { white-space: nowrap; letter-spacing: .15px; }
.change svg { margin-bottom: 4px; }
.change .caret { vertical-align: 2px; }

.work { flex: 1; min-height: 0; display: flex; background: linear-gradient(#cdd0d5, #b9bcc1 12%, #b9bcc1); }
.navpane { width: 206px; margin-top: 3px; border: 1px solid #8d929a; border-width: 1px 1px 0; background: #e8ebf0; padding: 2px 7px 3px; display: flex; flex-direction: column; }
.nhead { height: 17px; margin: 0 -5px; padding: 0 5px 0 2px; background: #cdd3dc; display: flex; justify-content: space-between; line-height: 17px; font-size: 11.5px; }
.nhead span, .search span { display: flex; align-items: center; gap: 9px; }
.search { height: 22px; margin-top: 7px; padding: 0 3px 0 2px; background: #fff; border: 1px solid #c5c9d0; display: flex; justify-content: space-between; line-height: 20px; color: #5c6470; }
.ntabs { height: 26px; margin-top: 8px; display: flex; position: relative; z-index: 1; margin-bottom: -1px; }
.ntabs span { width: 26px; padding-bottom: 1px; border: 1px solid #b5b9c1; border-left-width: 0; display: flex; align-items: center; justify-content: center; }
.ntabs .on { background: #fff; border-left-width: 1px; border-bottom: 0; width: 27px; }
.ntabs div { margin-left: auto; display: flex; gap: 13px; padding: 8px 7px 0 0; }
.nbody { flex: 1; background: #fff; border: 1px solid #b5b9c1; padding: 20px 0 0 21px; letter-spacing: .04px; white-space: nowrap; }
.nbody p { margin: 0 0 13px; }

.canvas { width: 1143px; padding: 7px 0 0 177px; overflow: hidden; }
.page { width: 793px; height: 556px; background: #fff; display: flex; align-items: flex-start; box-shadow: 0 2px 7px #707379; }
.sheet { width: 731px; height: 556px; margin-left: 26px; margin-right: 26px; border: solid #6a6a6a; border-width: 0 2px; padding: 20px 0 0 46px; }
.sheet h2 { margin: 0 0 26px 14px; font: bold 15px/22px "DejaVu Serif", serif; color: #1f497d; letter-spacing: -.17px; white-space: nowrap; }
.handle { width: 5px; height: 7px; margin-top: 402px; border: 1px solid #6c8ba8; background: #e6f1f8; flex: none; }
.page > .handle:first-child { margin-left: -1px; margin-right: 1px; }
.page > .handle:last-child { margin-left: 1px; margin-right: -1px; }
.circuit { background: #e6e2d6; margin-top: 39px; }
.wires { fill: none; stroke: #2a6433; stroke-width: 1.400; }
.dots { fill: none; stroke: #063b0c; stroke-width: 3.800; stroke-linecap: round; }
.pin { fill: none; stroke: #b5373b; stroke-width: 1.300; }
.maroon { fill: none; stroke: #8c1014; stroke-width: 1.200; }
.arc-gap { fill: none; stroke: #f4e6dc; stroke-width: 3; }
.body { fill: #cdc9a9; stroke: #8c1014; stroke-width: 1.300; }
.ball { fill: #780308; }
.node { fill: #e5e1d5; stroke: #8c1014; }
.hi { fill: #ff3c3c; } .lo { fill: #3c3cf5; }
.s { font: 5.400px "Liberation Sans", sans-serif; fill: #1a1a1a; }
.l { font: 7.900px "Liberation Sans", sans-serif; fill: #111; }
.lamp { stroke: #7a1412; stroke-width: 1.200; }
.tri { fill: currentColor; stroke: #8c1014; stroke-width: .6; }
.on { fill: #087d08; color: #3dff2e; }
.off { fill: #050000; color: #050000; }

.vscroll { width: 17px; background: #dde0e5; display: flex; flex-direction: column; align-items: center; }
.split { width: 9px; height: 3px; margin-top: 5px; background: #666b72; }
.ruler { margin-top: 4px; }
.vscroll .up { margin-top: 9px; }
.thumb { width: 15px; height: 43px; margin-top: 193px; border: 1px solid #8b9199; border-radius: 2px; background: repeating-linear-gradient(#777 0 1px, transparent 1px 3px) center / 7px 7px no-repeat, linear-gradient(90deg, #fff, #d3d7dd); }
.thumb + .caret { margin-top: 228px; }
.browse { margin-top: 6px; }

.status { height: 22px; flex: none; display: flex; align-items: center; border-top: 1px solid #9ea3aa; background: linear-gradient(#e3e6ea, #b9bdc1); letter-spacing: .1px; }
.st1 { width: 78px; padding-left: 8px; } .st2 { width: 62px; padding-left: 9px; } .st3 { width: 35px; padding-left: 11px; } .st4 { width: 92px; padding-left: 9px; }
.status > span { border-right: 1px solid #a2a7ae; line-height: 18px; white-space: nowrap; }
.status > .st3, .status > .pct { border: 0; }
.status > .st4, .status > .st1, .status > .st2 { line-height: 16px; padding-bottom: 2px; }
.views { margin-left: 820px; border-left: 1px solid #92979e; width: 102px; height: 20px; display: flex; align-items: center; gap: 6px; padding-left: 5px; }
.views .sel { width: 19px; height: 19px; margin-right: -3px; border: 1px solid #c28b25; border-radius: 2px; background: #ffd968; display: grid; place-items: center; flex: none; }
.pct { width: 35px; margin-left: 6px; letter-spacing: -.25px; }

.taskbar { height: 48px; flex: none; display: flex; background: linear-gradient(90deg, #e9f1fb, #dce7f8 20%, #d8e1f6 35%, #dadff2 60%, #dbe6f6 75%, #e5f0fa); color: #111; }
.apps { display: flex; padding-left: 376px; }
.apps span { width: 43.900px; padding: 12px 12px 0; position: relative; }
.apps svg { width: 20px; height: 24px; }
.apps span:nth-child(11) svg { width: 24px; margin-left: -2px; }
.run::after, .active::after { content: ""; position: absolute; left: 19px; top: 40px; width: 6px; height: 3px; border-radius: 2px; background: #7c8088; }
.active::before { content: ""; position: absolute; left: 4px; top: 5px; width: 36px; height: 38px; border-radius: 4px; background: #f3f6fc; z-index: 0; }
.active svg { position: relative; z-index: 1; }
.active::after { left: 14px; width: 16px; background: #0067c0; }
.dev { font: bold 8.500px "Open Sans", sans-serif; text-anchor: middle; }
.w { fill: #fff; } .k { fill: #06122b; }
.tray { margin-left: auto; display: flex; align-items: center; padding-right: 18px; font-size: 11px; line-height: 16px; }
.tray svg { margin-right: 7px; }
.tray > :first-child { margin-right: 9px; }
.lang { width: 34px; margin: 0 13px 0 1px; text-align: center; }
.clock { width: 58px; margin-left: 5px; text-align: right; white-space: nowrap; letter-spacing: -.15px; }
```
